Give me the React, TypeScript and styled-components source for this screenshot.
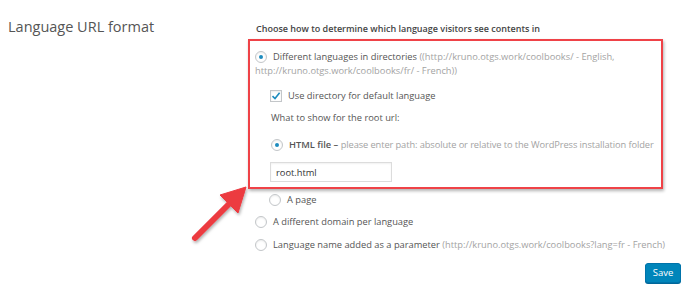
import styled, { createGlobalStyle } from "styled-components";

const GlobalStyle = createGlobalStyle`
	body {
		margin: 0;
		background: #ffffff;
		font-family: "Open Sans", "Liberation Sans", sans-serif;
	}
`;

const Page = styled.div`
	position: relative;
	width: 691px;
	height: 298px;
	overflow: hidden;
	display: grid;
	grid-template-columns: 255px 1fr;
	padding-right: 10px;
	box-sizing: border-box;
`;

const Label = styled.div`
	padding: 17px 0 0 8px;
	font-size: 14.5px;
	line-height: 20px;
	color: #555;
`;

const Field = styled.div`
	display: flex;
	flex-direction: column;
	padding-top: 22px;
	font-size: 9.3px;
	line-height: 14px;
	color: #555;
	white-space: nowrap;
`;

const Heading = styled.div`
	font-weight: 600;
	font-size: 9px;
	color: #444;
	padding-left: 1px;
`;

const Highlight = styled.div`
	margin: 3px 0 0 -7px;
	width: 415px;
	box-sizing: border-box;
	border: 2px solid #ef4247;
	box-shadow: 1px 2px 3px rgba(0, 0, 0, 0.3);
	padding: 9px 0 5px 5px;
	display: flex;
	flex-direction: column;
`;

const Option = styled.label<{ $indent?: number; $gap?: number }>`
	display: flex;
	align-items: flex-start;
	gap: 6px;
	margin-left: ${({ $indent }) => $indent ?? 0}px;
	margin-top: ${({ $gap }) => $gap ?? 0}px;
`;

const Radio = styled.span<{ $checked?: boolean }>`
	flex: none;
	width: 12px;
	height: 12px;
	margin-top: 1px;
	box-sizing: border-box;
	border: 1px solid #c3c6c9;
	border-radius: 50%;
	box-shadow: inset 0 1px 2px rgba(0, 0, 0, 0.08);
	display: flex;
	align-items: center;
	justify-content: center;
	&::after {
		content: "";
		display: ${({ $checked }) => ($checked ? "block" : "none")};
		width: 4px;
		height: 4px;
		border-radius: 50%;
		background: #1e8cbe;
	}
`;

const Box = styled.span`
	flex: none;
	width: 12px;
	height: 12px;
	margin-top: 1px;
	box-sizing: border-box;
	border: 1px solid #c3c6c9;
	box-shadow: inset 0 1px 2px rgba(0, 0, 0, 0.08);
	display: flex;
	align-items: center;
	justify-content: center;
`;

const Hint = styled.span<{ $tight?: boolean }>`
	color: #a3a3a3;
	letter-spacing: ${({ $tight }) => ($tight ? "-0.1px" : "normal")};
`;

const Note = styled.div<{ $indent?: number; $gap?: number }>`
	margin-left: ${({ $indent }) => $indent ?? 0}px;
	margin-top: ${({ $gap }) => $gap ?? 0}px;
`;

const Strong = styled.span`
	font-weight: 600;
`;

const TextInput = styled.input`
	margin: 10px 0 0 15px;
	width: 122px;
	height: 20px;
	box-sizing: border-box;
	border: 1px solid #dcdcdc;
	box-shadow: inset 0 1px 2px rgba(0, 0, 0, 0.06);
	padding: 0 5px;
	font: inherit;
	font-size: 9.3px;
	color: #333;
	outline: none;
`;

const Actions = styled.div`
	display: flex;
	justify-content: flex-end;
	margin-top: 11px;
`;

const SaveButton = styled.button`
	width: 36px;
	height: 20px;
	padding: 0;
	border: 1px solid #0073aa;
	border-radius: 3px;
	background: #0085ba;
	box-shadow: 0 1px 0 #006799;
	color: #fff;
	font: inherit;
	font-size: 9.5px;
`;

const Arrow = styled.svg`
	position: absolute;
	left: 180px;
	top: 180px;
	overflow: visible;
`;

const Check = () => (
	<svg width="10" height="10" viewBox="0 0 10 10">
		<path d="M1.5 5.2 L4 7.6 L8.6 1.8" fill="none" stroke="#1e8cbe" strokeWidth="1.6" />
	</svg>
);

export default function App() {
	return (
		<>
			<GlobalStyle />
			<Page>
				<Label>Language URL format</Label>
				<Field>
					<Heading>Choose how to determine which language visitors see contents in</Heading>
					<Highlight>
						<Option>
							<Radio $checked />
							<span>
								Different languages in directories{" "}
								<Hint>((http://kruno.otgs.work/coolbooks/ - English,</Hint>
							</span>
						</Option>
						<Note>
							<Hint>http://kruno.otgs.work/coolbooks/fr/ - French))</Hint>
						</Note>
						<Option $indent={15} $gap={11}>
							<Box>
								<Check />
							</Box>
							<span>Use directory for default language</span>
						</Option>
						<Note $indent={16} $gap={8}>
							What to show for the root url:
						</Note>
						<Option $indent={16} $gap={13}>
							<Radio $checked />
							<span>
								<Strong>HTML file –</Strong>{" "}
								<Hint $tight>please enter path: absolute or relative to the WordPress installation folder</Hint>
							</span>
						</Option>
						<TextInput defaultValue="root.html" />
					</Highlight>
					<Option $indent={14} $gap={4}>
						<Radio />
						<span>A page</span>
					</Option>
					<Option $gap={8}>
						<Radio />
						<span>A different domain per language</span>
					</Option>
					<Option $gap={9}>
						<Radio />
						<span>
							Language name added as a parameter{" "}
							<Hint>(http://kruno.otgs.work/coolbooks?lang=fr - French)</Hint>
						</span>
					</Option>
					<Actions>
						<SaveButton>Save</SaveButton>
					</Actions>
				</Field>
				<Arrow width="80" height="70">
					<defs>
						<filter id="sh" x="-20%" y="-20%" width="140%" height="140%">
							<feDropShadow dx="1" dy="2" stdDeviation="1.5" floodOpacity="0.3" />
						</filter>
					</defs>
					<g filter="url(#sh)" fill="#ec3a40" stroke="#ec3a40">
						<line x1="15" y1="58" x2="50" y2="23" strokeWidth="6" strokeLinecap="round" />
						<polygon points="66,7 40,15 58,33" strokeWidth="1" strokeLinejoin="round" />
					</g>
				</Arrow>
			</Page>
		</>
	);
}
